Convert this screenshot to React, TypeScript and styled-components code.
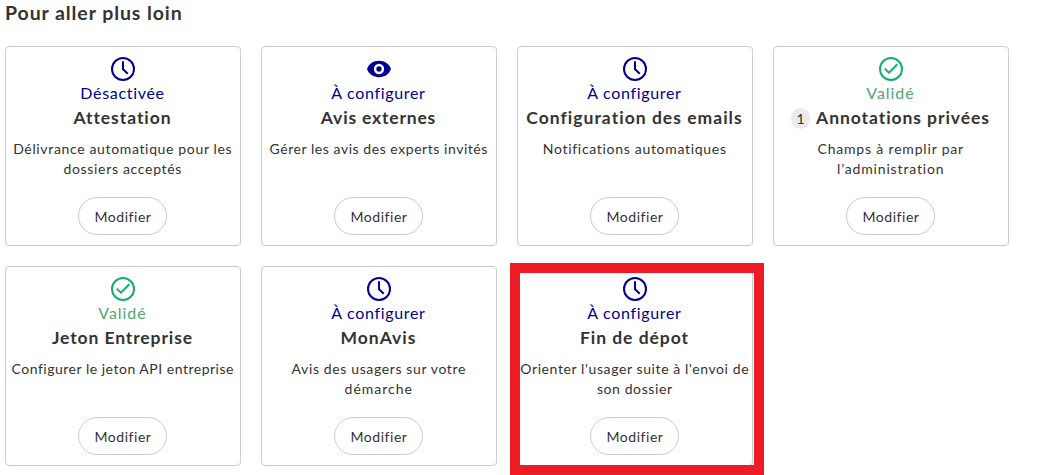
import React from 'react';
import styled, { createGlobalStyle } from 'styled-components';

type Status = 'clock' | 'eye' | 'check';
type Line = { text: string; tracking: number };
type CardData = {
  icon: Status;
  status: Line;
  title: Line;
  lines: Line[];
  count?: number;
  highlighted?: boolean;
};

const GlobalStyle = createGlobalStyle`
  *, *::before, *::after { box-sizing: border-box; }
  body {
    margin: 0;
    background: #fff;
    color: #333;
    font-family: Lato, "Open Sans", sans-serif;
    overflow: hidden;
  }
`;

const Page = styled.main`
  height: 475px;
  padding: 1px 0 0 5px;
`;

const Heading = styled.h2`
  margin: 0 0 21px;
  font-size: 19.5px;
  line-height: 24px;
  font-weight: 700;
  letter-spacing: 0.92px;
`;

const Grid = styled.div`
  display: grid;
  grid-template-columns: repeat(4, 236px);
  grid-auto-rows: 200px;
  gap: 20px;
`;

const Card = styled.article`
  position: relative;
  display: flex;
  flex-direction: column;
  align-items: center;
  padding: 10px 0;
  border: 1px solid #ccc;
  border-radius: 4px;
  white-space: nowrap;
`;

const Highlight = styled.div`
  position: absolute;
  top: -4px;
  left: -8px;
  width: 254px;
  height: 212px;
  border: 10px solid #ed1c24;
  pointer-events: none;
`;

const Icon = styled.svg`
  display: block;
  flex: none;
  width: 24px;
  height: 24px;
`;

const StatusText = styled.p<{ $done: boolean; $tracking: number }>`
  margin: 0 1px 0 0;
  color: ${(p) => (p.$done ? '#4fa577' : '#000091')};
  font-size: 16px;
  line-height: 24px;
  letter-spacing: ${(p) => p.$tracking}px;
`;

const TitleRow = styled.div`
  display: flex;
  align-items: center;
  gap: 6px;
  height: 24px;
  margin: 1px 1px 9px 0;
`;

const Title = styled.h3<{ $tracking: number }>`
  margin: 0;
  font-size: 17.5px;
  line-height: 24px;
  font-weight: 700;
  letter-spacing: ${(p) => p.$tracking + 0.26}px;
`;

const Count = styled.span`
  width: 19px;
  height: 21px;
  margin-top: 1px;
  border-radius: 10px;
  background: #ebebeb;
  font-size: 14px;
  line-height: 21px;
  text-align: center;
`;

const DescriptionLine = styled.span<{ $tracking: number }>`
  margin-right: 0.5px;
  font-size: 14px;
  line-height: 20px;
  letter-spacing: ${(p) => p.$tracking}px;
`;

const EditButton = styled.button`
  width: 89px;
  height: 38px;
  margin: auto 1px 0 0;
  padding: 2px 0 0 1px;
  border: 1px solid #ccc;
  border-radius: 19px;
  background: #fff;
  color: #333;
  font: 400 14px/20px Lato, "Open Sans", sans-serif;
  letter-spacing: 0.53px;
`;

function StatusIcon({ kind }: { kind: Status }) {
  if (kind === 'eye') {
    return (
      <Icon viewBox="0 0 24 24" fill="#000091">
        <path d="M12 3.800C6.200 3.800 1.800 7 0 12c1.800 5 6.200 8.200 12 8.200S22.200 17 24 12C22.200 7 17.800 3.800 12 3.800Z" />
        <circle cx="12" cy="12" r="3.900" fill="none" stroke="#fff" strokeWidth="2.500" />
      </Icon>
    );
  }
  if (kind === 'check') {
    return (
      <Icon viewBox="0 0 24 24" fill="none" stroke="#15ad70" strokeWidth="2">
        <circle cx="12" cy="12" r="11" />
        <path d="M5.700 11.600 10 15.700 18.300 7.300" />
      </Icon>
    );
  }
  return (
    <Icon viewBox="0 0 24 24" fill="none" stroke="#000091" strokeWidth="2">
      <circle cx="12" cy="12" r="11" />
      <path d="M12 4.200V12.200L16.800 16.800" />
    </Icon>
  );
}

const toConfigure: Line = { text: 'À configurer', tracking: 0.67 };
const validated: Line = { text: 'Validé', tracking: 0.96 };

const cards: CardData[] = [
  {
    icon: 'clock',
    status: { text: 'Désactivée', tracking: 0.68 },
    title: { text: 'Attestation', tracking: 0.68 },
    lines: [
      { text: 'Délivrance automatique pour les', tracking: 0.653 },
      { text: 'dossiers acceptés', tracking: 0.688 },
    ],
  },
  {
    icon: 'eye',
    status: toConfigure,
    title: { text: 'Avis externes', tracking: 0.56 },
    lines: [{ text: 'Gérer les avis des experts invités', tracking: 0.548 }],
  },
  {
    icon: 'clock',
    status: toConfigure,
    title: { text: 'Configuration des emails', tracking: 0.76 },
    lines: [{ text: 'Notifications automatiques', tracking: 0.692 }],
  },
  {
    icon: 'check',
    status: validated,
    title: { text: 'Annotations privées', tracking: 0.67 },
    count: 1,
    lines: [
      { text: 'Champs à remplir par', tracking: 0.82 },
      { text: 'l’administration', tracking: 0.85 },
    ],
  },
  {
    icon: 'check',
    status: validated,
    title: { text: 'Jeton Entreprise', tracking: 0.63 },
    lines: [{ text: 'Configurer le jeton API entreprise', tracking: 0.51 }],
  },
  {
    icon: 'clock',
    status: toConfigure,
    title: { text: 'MonAvis', tracking: 0.75 },
    lines: [
      { text: 'Avis des usagers sur votre', tracking: 0.628 },
      { text: 'démarche', tracking: 1 },
    ],
  },
  {
    icon: 'clock',
    status: toConfigure,
    title: { text: 'Fin de dépot', tracking: 0.71 },
    lines: [
      { text: "Orienter l'usager suite à l'envoi de", tracking: 0.606 },
      { text: 'son dossier', tracking: 0.6 },
    ],
    highlighted: true,
  },
];

export default function App() {
  return (
    <Page>
      <GlobalStyle />
      <Heading>Pour aller plus loin</Heading>
      <Grid>
        {cards.map((card) => (
          <Card key={card.title.text}>
            <StatusIcon kind={card.icon} />
            <StatusText $done={card.icon === 'check'} $tracking={card.status.tracking}>
              {card.status.text}
            </StatusText>
            <TitleRow>
              {card.count !== undefined && <Count>{card.count}</Count>}
              <Title $tracking={card.title.tracking}>{card.title.text}</Title>
            </TitleRow>
            {card.lines.map((line) => (
              <DescriptionLine key={line.text} $tracking={line.tracking}>
                {line.text}
              </DescriptionLine>
            ))}
            <EditButton type="button">Modifier</EditButton>
            {card.highlighted && <Highlight />}
          </Card>
        ))}
      </Grid>
    </Page>
  );
}
